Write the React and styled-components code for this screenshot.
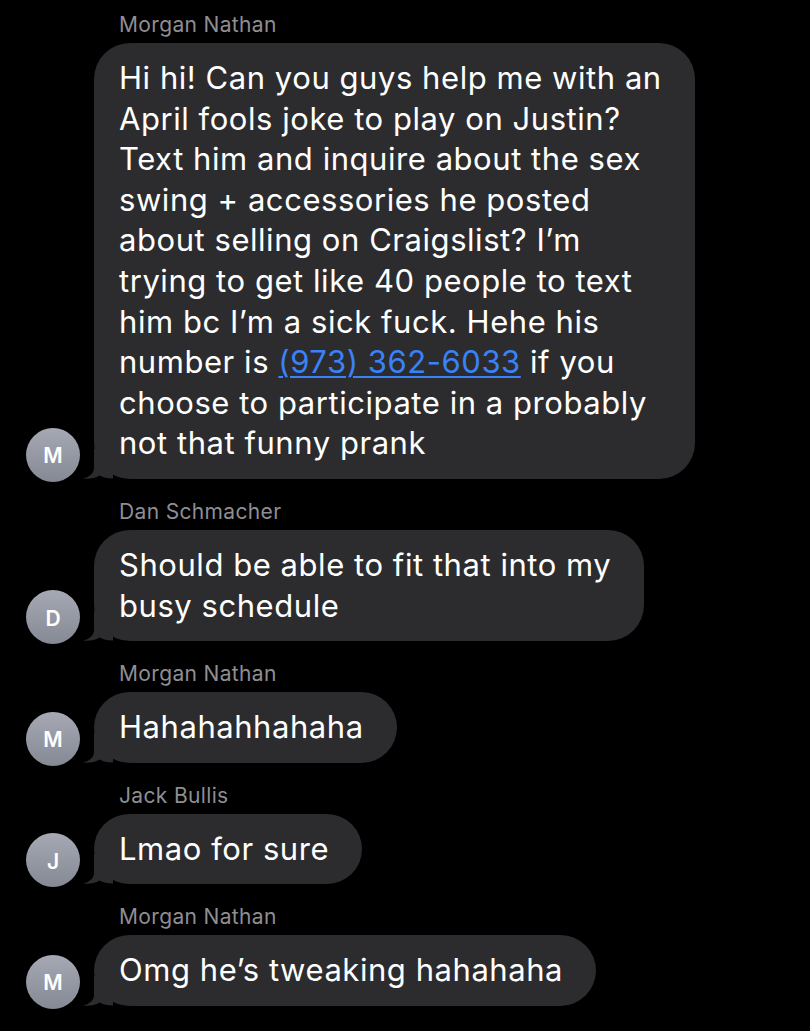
import React from "react";
import styled, { createGlobalStyle } from "styled-components";

const GlobalStyle = createGlobalStyle`
  html, body {
    margin: 0;
    background: #000;
  }
  body {
    font-family: Inter, "Noto Sans", "Liberation Sans", sans-serif;
    -webkit-font-smoothing: antialiased;
  }
`;

const Thread = styled.div`
  display: flex;
  flex-direction: column;
  padding-top: 13px;
  min-height: 1031px;
  box-sizing: border-box;
`;

const Group = styled.div`
  display: flex;
  flex-direction: column;

  & + & {
    margin-top: 21px;
  }
`;

const SenderName = styled.div`
  margin-left: 119px;
  font-size: 21px;
  line-height: 24px;
  color: #8e8e93;
  letter-spacing: 0.35px;
`;

const Row = styled.div`
  display: flex;
  align-items: flex-end;
  gap: 14px;
  padding-left: 26px;
  margin-top: 6px;
`;

const Avatar = styled.div`
  flex: none;
  width: 54px;
  height: 54px;
  margin-bottom: -3px;
  border-radius: 50%;
  background: linear-gradient(180deg, #a6a9b4 0%, #858994 100%);
  color: #fff;
  font-size: 21px;
  font-weight: 600;
  display: flex;
  align-items: center;
  justify-content: center;
  padding-top: 2px;
  box-sizing: border-box;
`;

const Bubble = styled.div`
  position: relative;
  background: #2c2c2e;
  color: #fff;
  border-radius: 36px;
  padding: 15px 33px 15px 25px;
  font-size: 31px;
  line-height: 40.6px;
  letter-spacing: 0.55px;
`;

const Tail = styled.svg`
  position: absolute;
  left: -11px;
  bottom: 0;
  width: 30px;
  height: 30px;
  fill: #2c2c2e;
`;

const Line = styled.div`
  position: relative;
  white-space: nowrap;
`;

const Phone = styled.span`
  color: #3a82f7;
  text-decoration: underline;
  text-decoration-thickness: 2px;
  text-underline-offset: 3px;
`;

const messages = [
  {
    sender: "Morgan Nathan",
    lines: [
      "Hi hi! Can you guys help me with an",
      "April fools joke to play on Justin?",
      "Text him and inquire about the sex",
      "swing + accessories he posted",
      "about selling on Craigslist? I’m",
      "trying to get like 40 people to text",
      "him bc I’m a sick fuck. Hehe his",
      <>
        number is <Phone>(973) 362-6033</Phone> if you
      </>,
      "choose to participate in a probably",
      "not that funny prank",
    ],
  },
  {
    sender: "Dan Schmacher",
    lines: ["Should be able to fit that into my", "busy schedule"],
  },
  { sender: "Morgan Nathan", lines: ["Hahahahhahaha"] },
  { sender: "Jack Bullis", lines: ["Lmao for sure"] },
  { sender: "Morgan Nathan", lines: ["Omg he’s tweaking hahahaha"] },
];

const App = () => {
  return (
    <>
      <GlobalStyle />
      <Thread>
        {messages.map((msg, i) => (
          <Group key={i}>
            <SenderName>{msg.sender}</SenderName>
            <Row>
              <Avatar>{msg.sender[0]}</Avatar>
              <Bubble>
                <Tail viewBox="0 0 30 30" aria-hidden="true">
                  <path d="M11 0 L11 19 C11 24.5 6 28.2 0 29.6 C6 30.4 12 29.4 16.5 26.6 C20 28.6 24 29.6 30 29.6 L30 0 Z" />
                </Tail>
                {msg.lines.map((line, j) => (
                  <Line key={j}>{line}</Line>
                ))}
              </Bubble>
            </Row>
          </Group>
        ))}
      </Thread>
    </>
  );
};

export default App;
